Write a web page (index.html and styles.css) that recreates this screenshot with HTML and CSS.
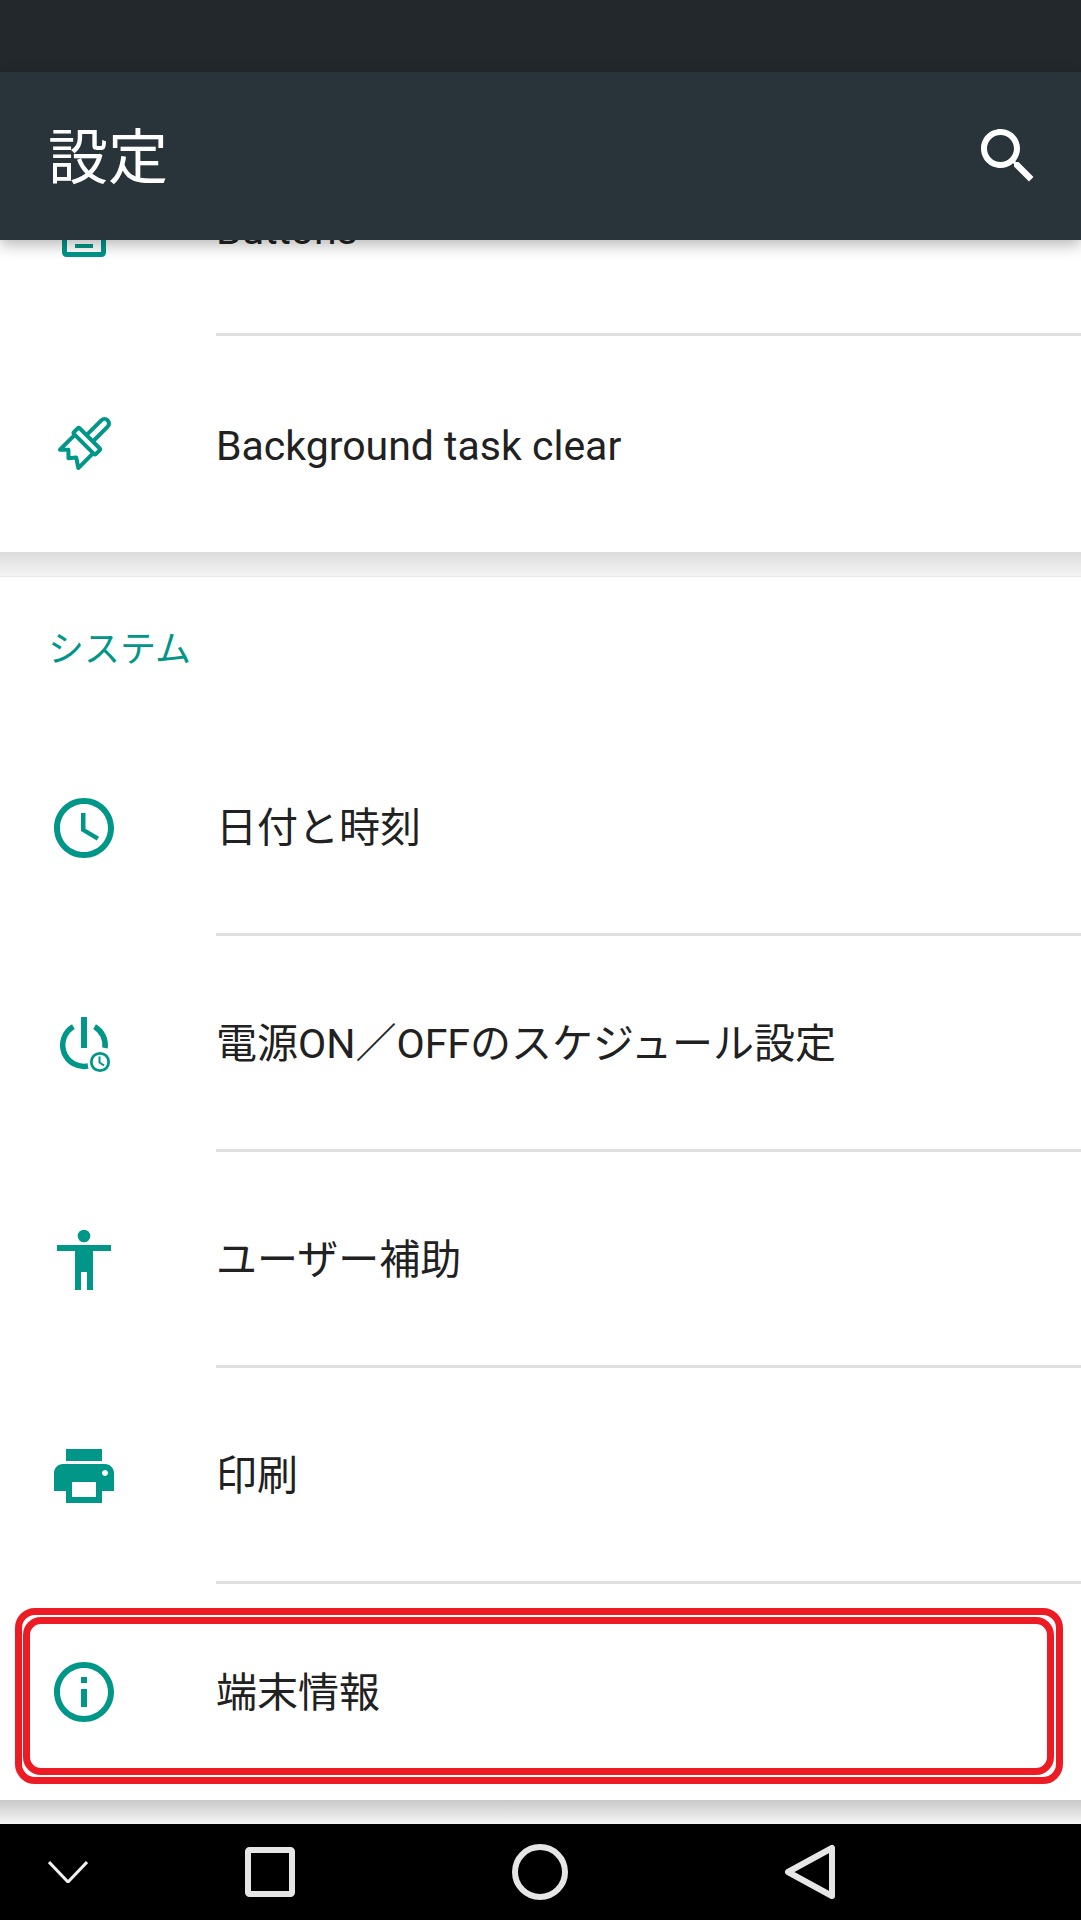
FILE: index.html
```html
<!DOCTYPE html>
<html lang="ja">
<head>
<meta charset="utf-8">
<title>設定</title>
<link rel="stylesheet" href="styles.css">
</head>
<body>
<div class="screen">
  <div class="status"></div>
  <header class="toolbar">
    <h1 class="title">設定</h1>
    <svg class="search" viewBox="0 0 24 24"><path d="M15.5 14h-.79l-.28-.27C15.41 12.59 16 11.11 16 9.5 16 5.91 13.09 3 9.5 3S3 5.91 3 9.5 5.91 16 9.5 16c1.61 0 3.09-.59 4.23-1.57l.27.28v.79l5 4.99L20.49 19l-4.99-5zm-6 0C7.01 14 5 11.99 5 9.5S7.01 5 9.5 5 14 7.01 14 9.5 11.99 14 9.5 14z"/></svg>
  </header>
  <main class="scroller">
    <section class="card">
      <div class="row">
        <svg class="icon" viewBox="0 0 72 72"><rect x="16.500" y="-20" width="39" height="82.500" rx="2" class="line"/><path d="M27 54h18" class="line thinline"/></svg>
        <div class="label latin">Buttons</div>
      </div>
      <div class="row">
        <svg class="icon" viewBox="0 0 72 72">
          <g transform="translate(36 36) rotate(45)" class="line thin">
            <path d="M-4.500 -8V-29a4.500 4.500 0 0 1 9 0V-8"/>
            <rect x="-15.500" y="-8" width="31" height="8" rx="1.500"/>
            <path d="M-13 0V21L-7 15L-1 21L4 15L13 21V0"/>
          </g>
        </svg>
        <div class="label latin plain">Background task clear</div>
      </div>
    </section>
    <div class="gap"></div>
    <section class="card card-top">
      <h2 class="section">システム</h2>
      <div class="row">
        <svg class="icon" viewBox="0 0 24 24"><path class="fill" d="M11.99 2C6.47 2 2 6.48 2 12s4.47 10 9.99 10C17.52 22 22 17.52 22 12S17.52 2 11.99 2zM12 20c-4.42 0-8-3.58-8-8s3.58-8 8-8 8 3.58 8 8-3.58 8-8 8zM12.500 7H11v6l5.250 3.150.75-1.230-4.500-2.670z"/></svg>
        <div class="label">日付と時刻</div>
      </div>
      <div class="row">
        <svg class="icon" viewBox="0 0 72 72">
          <path class="fill" d="M33 9h6v31h-6z"/>
          <path class="line wide" d="M25.400 18.600A21.300 21.300 0 0 0 40 58M57 40A21.300 21.300 0 0 0 46.600 18.600"/>
          <circle class="line slim" cx="52" cy="54" r="8.700"/>
          <path class="line tiny" d="M51.500 48.500V54.500L56 57.500"/>
        </svg>
        <div class="label">電源ON／OFFのスケジュール設定</div>
      </div>
      <div class="row">
        <svg class="icon" viewBox="0 0 72 72">
          <circle class="fill" cx="36" cy="12" r="6.300"/>
          <path class="fill" d="M9 21h54v6H45v39h-6V48h-6v18h-6V27H9z"/>
        </svg>
        <div class="label">ユーザー補助</div>
      </div>
      <div class="row">
        <svg class="icon" viewBox="0 0 24 24"><path class="fill" d="M19 8H5c-1.660 0-3 1.340-3 3v6h4v4h12v-4h4v-6c0-1.660-1.340-3-3-3zm-3 11H8v-5h8v5zm3-7c-.55 0-1-.45-1-1s.45-1 1-1 1 .45 1 1-.45 1-1 1zm-1-9H6v4h12V3z"/></svg>
        <div class="label">印刷</div>
      </div>
      <div class="row row-highlighted">
        <svg class="icon" viewBox="0 0 24 24"><path class="fill" d="M11 7h2v2h-2zm0 4h2v6h-2zm1-9C6.480 2 2 6.480 2 12s4.480 10 10 10 10-4.480 10-10S17.520 2 12 2zm0 18c-4.410 0-8-3.590-8-8s3.590-8 8-8 8 3.590 8 8-3.590 8-8 8z"/></svg>
        <div class="label plain last">端末情報</div>
        <div class="frame"><div class="frame-inner"></div></div>
      </div>
    </section>
    <div class="gap gap-last"></div>
  </main>
  <nav class="navbar">
    <div class="nav-cell nav-cell-small"><svg class="nav-down" viewBox="0 0 40 22"><path d="M1 1L20 21L39 1"/></svg></div>
    <div class="nav-cell"><svg class="nav-icon" viewBox="0 0 56 56"><rect x="6" y="6" width="44" height="44" rx="1.500"/></svg></div>
    <div class="nav-cell"><svg class="nav-icon" viewBox="0 0 56 56"><circle cx="28" cy="28" r="25"/></svg></div>
    <div class="nav-cell"><svg class="nav-icon" viewBox="0 0 56 56"><path d="M50 4V52L6 28Z" class="tri"/></svg></div>
  </nav>
</div>
</body>
</html>
```
FILE: styles.css
```css
* { box-sizing: border-box; }
html, body { margin: 0; padding: 0; }
body {
  background: #fff;
  font-family: Roboto, "Noto Sans CJK JP", sans-serif;
  color: #212121;
}
.screen {
  width: 1081px;
  height: 1920px;
  display: flex;
  flex-direction: column;
  overflow: hidden;
}
.status { height: 72px; background: #22282b; flex: none; }
.toolbar {
  height: 168px;
  flex: none;
  background: #29343a;
  display: flex;
  align-items: center;
  justify-content: space-between;
  padding: 0 37px 0 48px;
  position: relative;
  z-index: 2;
  box-shadow: 0 5px 14px rgba(0, 0, 0, .28);
}
.title {
  margin: 0;
  padding-top: 5px;
  font-size: 60px;
  font-weight: 400;
  line-height: 72px;
  color: #fff;
}
.search { width: 72px; height: 72px; fill: #fff; }
.scroller {
  flex: 1;
  min-height: 0;
  display: flex;
  flex-direction: column;
  justify-content: flex-end;
  overflow: hidden;
  background: #f5f5f5;
}
.card { background: #fff; flex: none; }
.card-top { border-top: 1px solid #e8e8e8; }
.gap {
  height: 24px;
  flex: none;
  background: linear-gradient(#dcdcdc, #f3f3f3);
}
.gap-last { background: linear-gradient(#c8c8c8, #f5f5f5); }
.row {
  height: 216px;
  display: flex;
  align-items: center;
  padding-left: 48px;
  position: relative;
}
.icon { width: 72px; height: 72px; flex: none; margin-right: 96px; }
.fill { fill: #009688; }
.line { fill: none; stroke: #009688; stroke-width: 5; }
.thinline { stroke-width: 4; }
.thin { stroke-width: 4; stroke-linejoin: round; }
.wide { stroke-width: 5.500; }
.slim { stroke-width: 2.800; }
.tiny { stroke-width: 2; }
.label {
  flex: 1;
  align-self: stretch;
  display: flex;
  align-items: center;
  font-size: 41px;
  padding-bottom: 9px;
  box-shadow: inset 0 -3px 0 #e0e0e0;
}
.latin { padding-bottom: 0; padding-top: 3px; }
.plain { box-shadow: none; }
.last { padding-bottom: 7px; }
.section {
  margin: 0;
  height: 143px;
  padding: 49px 0 0 48px;
  font-size: 36px;
  line-height: 48px;
  font-weight: 400;
  color: #009688;
}
.frame {
  position: absolute;
  left: 15px;
  top: 24px;
  width: 1048px;
  height: 176px;
  border: 7px solid #ed1c24;
  border-radius: 20px;
  padding: 2px 2px 2px 1px;
}
.frame-inner {
  height: 100%;
  border: 7px solid #ed1c24;
  border-radius: 18px;
}
.navbar {
  height: 96px;
  flex: none;
  background: #000;
  display: flex;
  align-items: center;
}
.nav-cell { width: 270px; display: flex; justify-content: center; flex: none; }
.nav-cell-small { width: 135px; }
.nav-icon { width: 56px; height: 56px; fill: none; stroke: #e6e6e6; stroke-width: 6; }
.tri { stroke-linejoin: round; }
.nav-down { width: 40px; height: 22px; fill: none; stroke: #f0f0f0; stroke-width: 3; }
```
